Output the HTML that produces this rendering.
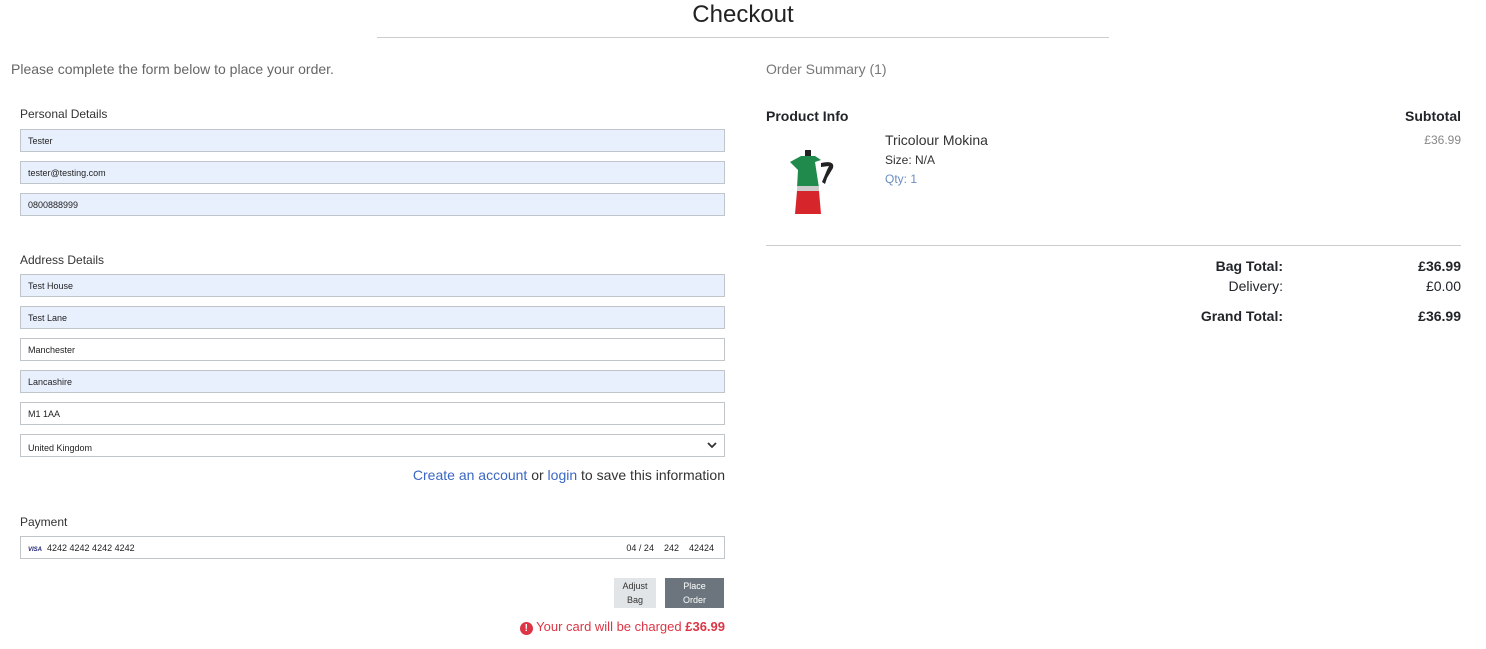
<!DOCTYPE html>
<html><head><style>
body{margin:0;width:1486px;height:649px;background:#fff;font-family:"Liberation Sans",sans-serif;position:relative;overflow:hidden;color:#212529}
.a{position:absolute}
.in{position:absolute;left:20px;height:21px;border:1px solid #bfc5c9;background:#e8f0fe;font-size:9px;line-height:22px;padding-left:7px;box-sizing:content-box;width:696px;color:#222}
.w{background:#fff}
.lbl{position:absolute;left:20px;font-size:12px;color:#333}
</style></head><body>
<div class="a" style="left:0;width:1486px;top:1px;text-align:center;font-size:24px;color:#222">Checkout</div>
<div class="a" style="left:377px;width:732px;top:37px;border-top:1px solid #ccc"></div>
<div class="a" style="left:11px;top:61px;font-size:14px;color:#666">Please complete the form below to place your order.</div>
<div class="a" style="left:766px;top:61px;font-size:14px;color:#777">Order Summary (1)</div>
<div class="lbl" style="top:107px">Personal Details</div>
<div class="in" style="top:129px">Tester</div>
<div class="in" style="top:161px">tester@testing.com</div>
<div class="in" style="top:193px">0800888999</div>
<div class="lbl" style="top:253px">Address Details</div>
<div class="in" style="top:274px">Test House</div>
<div class="in" style="top:306px">Test Lane</div>
<div class="in w" style="top:338px">Manchester</div>
<div class="in" style="top:370px">Lancashire</div>
<div class="in w" style="top:402px">M1 1AA</div>
<div class="in w" style="top:434px;line-height:26px;overflow:hidden">United Kingdom<svg class="a" style="right:7px;top:7px" width="10" height="7" viewBox="0 0 10 7"><path d="M1 1 L5 5 L9 1" stroke="#333" stroke-width="1.8" fill="none"/></svg></div>
<div class="a" style="left:300px;width:425px;top:467px;text-align:right;font-size:14px;color:#333"><span style="color:#3b66c4">Create an account</span> or <span style="color:#3b66c4">login</span> to save this information</div>
<div class="lbl" style="top:515px">Payment</div>
<div class="in w" style="top:536px"><span style="color:#1a1f71;font-size:6px;font-weight:bold;font-style:italic">VISA</span>&nbsp;&nbsp;4242 4242 4242 4242<span class="a" style="right:10px;top:0">04 / 24&nbsp;&nbsp;&nbsp;&nbsp;242&nbsp;&nbsp;&nbsp;&nbsp;42424</span></div>
<div class="a" style="left:614px;top:578px;width:42px;height:30px;background:#e2e5e7;font-size:9px;text-align:center;line-height:14px;padding-top:1px;box-sizing:border-box;color:#333">Adjust<br>Bag</div>
<div class="a" style="left:665px;top:578px;width:59px;height:30px;background:#6c757d;font-size:9px;text-align:center;line-height:14px;padding-top:1px;box-sizing:border-box;color:#fff">Place<br>Order</div>
<div class="a" style="left:400px;width:325px;top:619px;text-align:right;font-size:13px;color:#dc3545"><span style="display:inline-block;width:13px;height:13px;border-radius:50%;background:#dc3545;color:#fff;font-size:10px;line-height:13px;text-align:center;font-weight:bold;vertical-align:0px">!</span> Your card will be charged <b>£36.99</b></div>
<div class="a" style="left:766px;top:108px;font-size:14px;font-weight:bold">Product Info</div>
<div class="a" style="left:1300px;width:161px;top:108px;font-size:14px;font-weight:bold;text-align:right">Subtotal</div>
<svg class="a" style="left:785px;top:148px" width="70" height="70" viewBox="0 0 70 70">
<rect x="20" y="2" width="6" height="6" fill="#222"/>
<path d="M16 8 L30 8 L36 12 L30 14 L34 40 L12 40 L13 22 L5 14 Z" fill="#1f8a4c"/>
<path d="M36 15 Q50 12 48 20 L42 30 L40 36 L37 34 L42 22 L44 18 L36 19 Z" fill="#222"/>
<rect x="12" y="38" width="22" height="5" fill="#ccc"/>
<path d="M12 43 L34 43 L36 66 L10 66 Z" fill="#d7262b"/>
</svg>
<div class="a" style="left:885px;top:132px;font-size:14px;color:#333">Tricolour Mokina</div>
<div class="a" style="left:885px;top:153px;font-size:12px;color:#333">Size: N/A</div>
<div class="a" style="left:885px;top:172px;font-size:12px;color:#6c8ebf">Qty: 1</div>
<div class="a" style="left:1300px;width:161px;top:133px;font-size:12px;color:#888;text-align:right">£36.99</div>
<div class="a" style="left:766px;width:695px;top:245px;border-top:1px solid #ccc"></div>
<div class="a" style="left:1100px;width:183px;top:256px;font-size:14px;text-align:right;line-height:20px"><b>Bag Total:</b><br>Delivery:<br><div style="margin-top:10px;font-weight:bold">Grand Total:</div></div>
<div class="a" style="left:1361px;width:100px;top:256px;font-size:14px;text-align:right;line-height:20px"><b>£36.99</b><br>£0.00<br><div style="margin-top:10px;font-weight:bold">£36.99</div></div>
</body></html>
